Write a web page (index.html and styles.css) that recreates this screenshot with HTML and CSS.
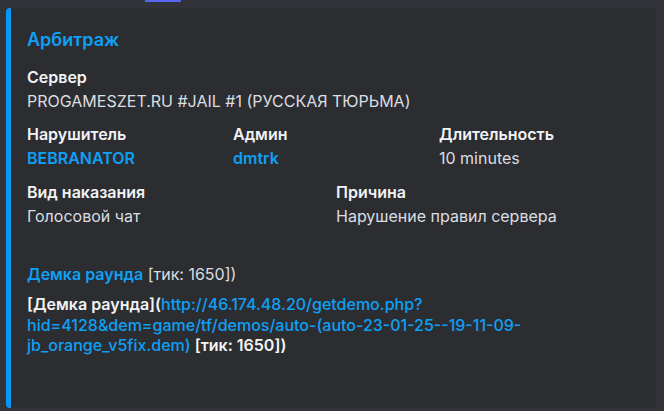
FILE: index.html
```html
<!DOCTYPE html>
<html lang="ru">
<head>
<meta charset="utf-8">
<link rel="stylesheet" href="styles.css">
</head>
<body>
<div class="topbar"></div>
<div class="embed">
  <div class="title">Арбитраж</div>
  <div class="fields">
    <div class="field full">
      <div class="name">Сервер</div>
      <div class="value">PROGAMESZET.RU #JAIL #1 (РУССКАЯ ТЮРЬМА)</div>
    </div>
    <div class="row three">
      <div class="field">
        <div class="name">Нарушитель</div>
        <div class="value link">BEBRANATOR</div>
      </div>
      <div class="field">
        <div class="name">Админ</div>
        <div class="value link">dmtrk</div>
      </div>
      <div class="field">
        <div class="name">Длительность</div>
        <div class="value">10 minutes</div>
      </div>
    </div>
    <div class="row two">
      <div class="field">
        <div class="name">Вид наказания</div>
        <div class="value">Голосовой чат</div>
      </div>
      <div class="field">
        <div class="name">Причина</div>
        <div class="value">Нарушение правил сервера</div>
      </div>
    </div>
    <div class="field demo">
      <div class="value"><span class="link">Демка раунда</span> [тик: 1650])</div>
    </div>
    <div class="field raw">
      <div class="name">[Демка раунда](<span class="url">http://46.174.48.20/getdemo.php?<br>hid=4128&amp;dem=game/tf/demos/auto-(auto-23-01-25--19-11-09-<br>jb_orange_v5fix.dem)</span> [тик: 1650])</div>
    </div>
  </div>
</div>
</body>
</html>
```
FILE: styles.css
```css
html, body {
  margin: 0;
  padding: 0;
  background: #313338;
  width: 664px;
  height: 411px;
  overflow: hidden;
}
body {
  font-family: Inter, "Noto Sans", "Liberation Sans", sans-serif;
  color: #dbdee1;
  position: relative;
}
.topbar {
  position: absolute;
  left: 145px;
  top: 0;
  width: 36px;
  height: 2px;
  background: #5865f2;
}
.embed {
  margin: 8px 8px 0 6px;
  height: 400px;
  box-sizing: border-box;
  background: #2b2d31;
  border-left: 5px solid #0b97f4;
  border-radius: 4px;
  padding: 20px 20px 0 16px;
}
.title {
  font-size: 18px;
  font-weight: 600;
  line-height: 24px;
  color: #0ea0f5;
}
.fields {
  margin-top: 15px;
  display: flex;
  flex-direction: column;
  gap: 12px;
}
.row {
  display: grid;
  column-gap: 8px;
}
.row.three { grid-template-columns: 198px 198px 198px; }
.row.two { grid-template-columns: 301px 301px; margin-top: 1px; }
.name {
  font-size: 16px;
  font-weight: 600;
  line-height: 21px;
  color: #f2f3f5;
  margin-bottom: 3px;
}
.value {
  font-size: 16px;
  line-height: 21px;
  color: #dbdee1;
}
.link {
  color: #0ea0f5;
  font-weight: 600;
}
.demo { margin-top: 25px; }
.raw { margin-top: -3px; }
.raw .name { line-height: 20.5px; }
.url {
  color: #0ea0f5;
  font-weight: 500;
}
```
